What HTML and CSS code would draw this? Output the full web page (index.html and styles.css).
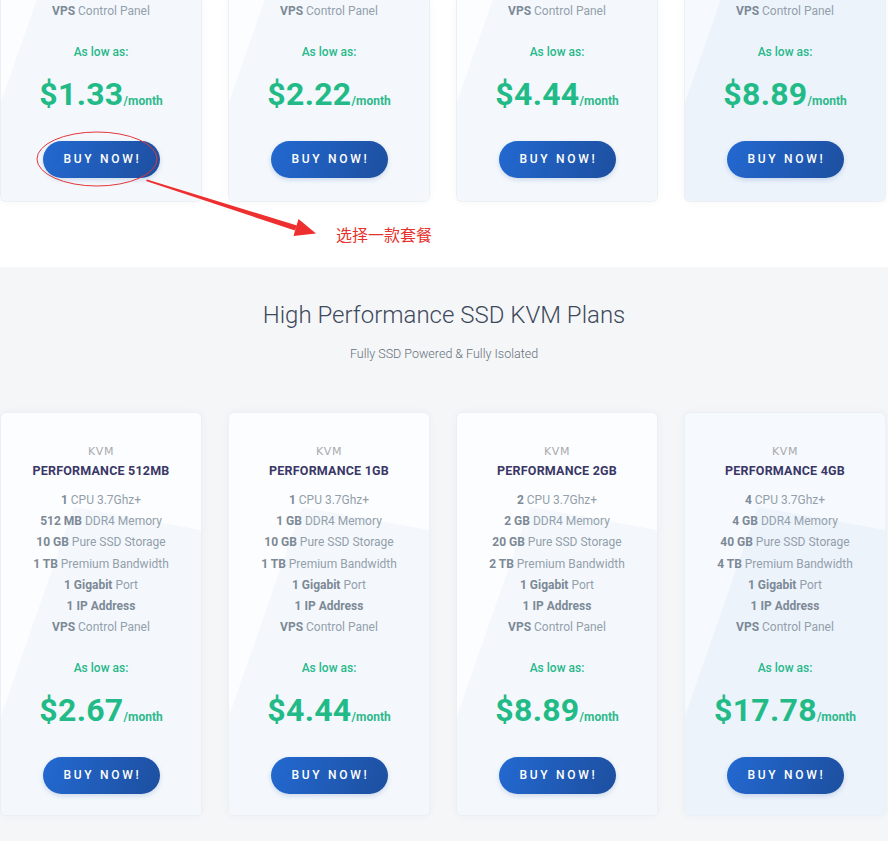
FILE: index.html
```html
<!DOCTYPE html>
<html lang="en">
<head>
  <meta charset="UTF-8">
  <meta name="viewport" content="width=device-width, initial-scale=1.0">
  <title>SSD KVM Plans</title>
  <link rel="stylesheet" href="styles.css">
</head>
<body>
  <section class="plans plans-top">
    <div class="plan-grid">
      <div class="plan plan-cut">
        <ul class="specs"><li><b>VPS</b> Control Panel</li></ul>
        <p class="low">As low as:</p>
        <p class="price"><span class="amount">$1.33</span><span class="per">/month</span></p>
        <a class="buy" href="#">BUY NOW!</a>
      </div>
      <div class="plan plan-cut">
        <ul class="specs"><li><b>VPS</b> Control Panel</li></ul>
        <p class="low">As low as:</p>
        <p class="price"><span class="amount">$2.22</span><span class="per">/month</span></p>
        <a class="buy" href="#">BUY NOW!</a>
      </div>
      <div class="plan plan-cut">
        <ul class="specs"><li><b>VPS</b> Control Panel</li></ul>
        <p class="low">As low as:</p>
        <p class="price"><span class="amount">$4.44</span><span class="per">/month</span></p>
        <a class="buy" href="#">BUY NOW!</a>
      </div>
      <div class="plan plan-cut plan-hot">
        <ul class="specs"><li><b>VPS</b> Control Panel</li></ul>
        <p class="low">As low as:</p>
        <p class="price"><span class="amount">$8.89</span><span class="per">/month</span></p>
        <a class="buy" href="#">BUY NOW!</a>
      </div>
    </div>

    <!-- 红色标注 -->
    <svg class="mark" width="888" height="267" viewBox="0 0 888 267">
      <ellipse cx="97" cy="159" rx="60" ry="27" fill="none" stroke="#e2363a" stroke-width="1"/>
      <polygon points="147,179.5 297,225.5 295,230.5 146,181" fill="#ee2f2f"/>
      <polygon points="316,233.5 298.5,219 293.5,236" fill="#ee2f2f"/>
    </svg>
    <span class="mark-text">选择一款套餐</span>
  </section>

  <section class="plans plans-kvm">
    <h2>High Performance SSD KVM Plans</h2>
    <p class="sub">Fully SSD Powered &amp; Fully Isolated</p>
    <div class="plan-grid">
      <div class="plan">
        <p class="kind">KVM</p>
        <h3>PERFORMANCE 512MB</h3>
        <ul class="specs">
          <li><b>1</b> CPU 3.7Ghz+</li>
          <li><b>512 MB</b> DDR4 Memory</li>
          <li><b>10 GB</b> Pure SSD Storage</li>
          <li><b>1 TB</b> Premium Bandwidth</li>
          <li><b>1 Gigabit</b> Port</li>
          <li><b>1 IP Address</b></li>
          <li><b>VPS</b> Control Panel</li>
        </ul>
        <p class="low">As low as:</p>
        <p class="price"><span class="amount">$2.67</span><span class="per">/month</span></p>
        <a class="buy" href="#">BUY NOW!</a>
      </div>
      <div class="plan">
        <p class="kind">KVM</p>
        <h3>PERFORMANCE 1GB</h3>
        <ul class="specs">
          <li><b>1</b> CPU 3.7Ghz+</li>
          <li><b>1 GB</b> DDR4 Memory</li>
          <li><b>10 GB</b> Pure SSD Storage</li>
          <li><b>1 TB</b> Premium Bandwidth</li>
          <li><b>1 Gigabit</b> Port</li>
          <li><b>1 IP Address</b></li>
          <li><b>VPS</b> Control Panel</li>
        </ul>
        <p class="low">As low as:</p>
        <p class="price"><span class="amount">$4.44</span><span class="per">/month</span></p>
        <a class="buy" href="#">BUY NOW!</a>
      </div>
      <div class="plan">
        <p class="kind">KVM</p>
        <h3>PERFORMANCE 2GB</h3>
        <ul class="specs">
          <li><b>2</b> CPU 3.7Ghz+</li>
          <li><b>2 GB</b> DDR4 Memory</li>
          <li><b>20 GB</b> Pure SSD Storage</li>
          <li><b>2 TB</b> Premium Bandwidth</li>
          <li><b>1 Gigabit</b> Port</li>
          <li><b>1 IP Address</b></li>
          <li><b>VPS</b> Control Panel</li>
        </ul>
        <p class="low">As low as:</p>
        <p class="price"><span class="amount">$8.89</span><span class="per">/month</span></p>
        <a class="buy" href="#">BUY NOW!</a>
      </div>
      <div class="plan plan-hot">
        <p class="kind">KVM</p>
        <h3>PERFORMANCE 4GB</h3>
        <ul class="specs">
          <li><b>4</b> CPU 3.7Ghz+</li>
          <li><b>4 GB</b> DDR4 Memory</li>
          <li><b>40 GB</b> Pure SSD Storage</li>
          <li><b>4 TB</b> Premium Bandwidth</li>
          <li><b>1 Gigabit</b> Port</li>
          <li><b>1 IP Address</b></li>
          <li><b>VPS</b> Control Panel</li>
        </ul>
        <p class="low">As low as:</p>
        <p class="price"><span class="amount">$17.78</span><span class="per">/month</span></p>
        <a class="buy" href="#">BUY NOW!</a>
      </div>
    </div>
  </section>
</body>
</html>
```

FILE: styles.css
```css
body { margin: 0; font-family: Roboto, "Liberation Sans", Arial, sans-serif; background: #fff; color: #8a96a3; }
p, ul, h2, h3 { margin: 0; padding: 0; }

.plans { text-align: center; }
.plans-top { position: relative; height: 267px; background: #fff; }
.plans-kvm { background: #f5f6f8; padding: 33px 0 26px; }
.plans-kvm h2 { font-size: 24px; line-height: 30px; font-weight: 300; color: #3e4a5b; }
.plans-kvm .sub { margin: 15px 0 49px; font-size: 12.5px; line-height: 18px; font-weight: 300; color: #66707b; }

.plan-grid { display: grid; grid-template-columns: repeat(4, 202px); gap: 26px; }

.plan { position: relative; box-sizing: border-box; height: 404px; padding: 31px 0 0; background: #fcfdfe; border: 1px solid #ebf0f5; border-radius: 6px; box-shadow: 0 0 8px rgba(30,60,110,0.04); overflow: hidden; }
.plan::before { content: ""; position: absolute; inset: 0; background: #f4f8fc; clip-path: polygon(73px calc(100% - 308px), 100% calc(100% - 285px), 100% 100%, 0 100%, 0 calc(100% - 99px)); }
.plan > * { position: relative; }
.plan-hot { background: #f6f9fd; }
.plan-hot::before { background: #edf3fb; }
.plan-cut { height: 202px; padding-top: 1px; border-top: none; border-radius: 0 0 6px 6px; }

.kind { font-family: "DejaVu Sans", "Open Sans", sans-serif; font-size: 11px; line-height: 16px; color: #a9aab0; letter-spacing: 0.6px; }
.plan h3 { margin-top: 2px; font-size: 12.5px; line-height: 18px; font-weight: 700; color: #3a3767; letter-spacing: 0.2px; }

.specs { list-style: none; margin-top: 10px; font-size: 12px; line-height: 21.2px; font-weight: 400; color: #939fab; }
.plan-cut .specs { margin-top: 0; }
.specs b { font-weight: 700; color: #7c8996; }

.low { margin-top: 22px; font-size: 12px; line-height: 16px; font-weight: 500; color: #27b98a; }
.price { display: flex; justify-content: center; align-items: baseline; margin-top: 14px; height: 40px; line-height: 40px; color: #22bb88; }
.price .amount { font-size: 32px; font-weight: 700; letter-spacing: 0.3px; }
.price .per { font-size: 12px; font-weight: 700; color: #2eb98b; }

.buy { display: inline-block; margin-top: 27px; width: 117px; height: 37px; line-height: 37px; border-radius: 19px; background: linear-gradient(110deg, #2369d1, #1d4f9f); color: #fff; font-size: 12px; font-weight: 500; letter-spacing: 2.7px; text-indent: 2.7px; text-decoration: none; box-shadow: 0 2px 5px rgba(29,79,159,0.18); }

.mark { position: absolute; top: 0; left: 0; pointer-events: none; }
.mark-text { position: absolute; left: 336px; top: 224px; font-family: "Noto Sans CJK SC", sans-serif; font-size: 16px; line-height: 20px; color: #e5322d; }
```
